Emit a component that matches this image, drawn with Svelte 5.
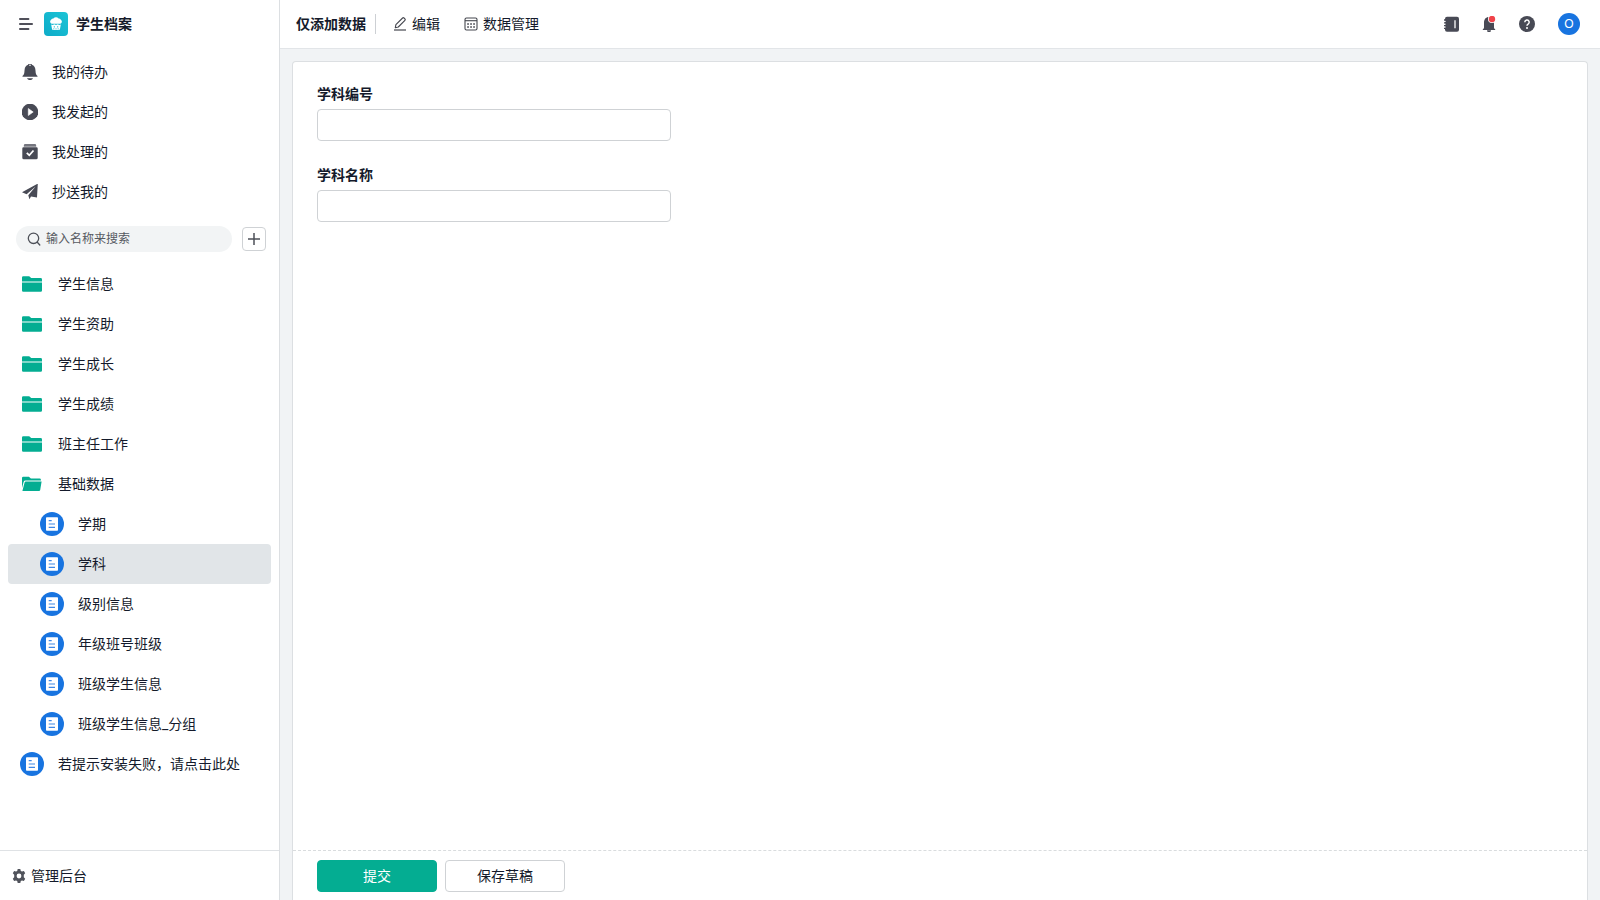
<script>
  const shortcuts = [
    { label: '我的待办', icon: 'bell' },
    { label: '我发起的', icon: 'play' },
    { label: '我处理的', icon: 'done' },
    { label: '抄送我的', icon: 'plane' }
  ];

  const entries = [
    { label: '学生信息', icon: 'folder' },
    { label: '学生资助', icon: 'folder' },
    { label: '学生成长', icon: 'folder' },
    { label: '学生成绩', icon: 'folder' },
    { label: '班主任工作', icon: 'folder' },
    {
      label: '基础数据',
      icon: 'open',
      children: ['学期', '学科', '级别信息', '年级班号班级', '班级学生信息', '班级学生信息_分组']
    },
    { label: '若提示安装失败，请点击此处', icon: 'form' }
  ];

  let selected = $state('学科');
  let keyword = $state('');
  let fields = $state([
    { id: 'code', label: '学科编号', value: '' },
    { id: 'name', label: '学科名称', value: '' }
  ]);
</script>

{#snippet formIcon()}
  <svg class="form-icon" width="24" height="24" viewBox="0 0 24 24" aria-hidden="true">
    <circle cx="12" cy="12" r="12" fill="#1874e0" />
    <rect x="6" y="5.3" width="12" height="13.4" rx=".8" fill="#fff" />
    <path d="M8.700 8.600h3M8.700 12h6.300M8.700 15.300h6.300" stroke="#3f88e4" stroke-width="1.200" />
  </svg>
{/snippet}

<div class="app">
  <aside class="sidebar">
    <div class="brand">
      <button class="icon-button" aria-label="菜单">
        <svg width="14" height="14" viewBox="0 0 14 14" fill="none" stroke="#50505a" stroke-width="1.8" stroke-linecap="round">
          <path d="M.9 2h8.600M.9 7h12.200M.9 12h8.600" />
        </svg>
      </button>
      <svg class="logo" width="24" height="24" viewBox="0 0 24 24" aria-hidden="true">
        <defs>
          <linearGradient id="logo-fill" x1="0" y1="1" x2="1" y2="0">
            <stop offset="0" stop-color="#0dabc8" />
            <stop offset="1" stop-color="#1cc4d6" />
          </linearGradient>
        </defs>
        <rect width="24" height="24" rx="4" fill="url(#logo-fill)" />
        <path fill="#fff" d="M7.600 11.700a2 2 0 0 1-.6-3.600 2.200 2.200 0 0 1 2.400-1.600 3.400 3.400 0 0 1 5.200 0A2.200 2.200 0 0 1 17 8.100a2 2 0 0 1-.6 3.600z" />
        <path fill="#fff" d="M7.200 12.400l1.500.5 1.600-.7 1.700.8 1.700-.8 1.600.7 1.500-.5-.8 4.700a1.100 1.100 0 0 1-1.100.9H9.100a1.100 1.100 0 0 1-1.100-.9z" />
        <path d="M10.300 14.200v1.300M13.700 14.200v1.300M9.800 17.400v-1M12 17.400v-1M14.200 17.400v-1" stroke="#14b7cf" stroke-width=".9" />
      </svg>
      <h1>学生档案</h1>
    </div>

    <nav class="menu" aria-label="流程">
      {#each shortcuts as item}
        <a class="row shortcut" href="#{item.icon}">
          <svg width="16" height="16" viewBox="0 0 16 16" fill="#484a55" aria-hidden="true">
            {#if item.icon === 'bell'}
              <path d="M8-.8a2 2 0 0 1 1.900 1.500c2.300.8 3.300 2.700 3.500 5l.3 3c.1 1.200.7 2.200 1.800 3.300v.8H.5V12c1.100-1.100 1.700-2.100 1.800-3.300l.3-3c.2-2.300 1.200-4.200 3.500-5A2 2 0 0 1 8-.8zM5 14.200h6c-.5 1.200-1.500 1.800-3 1.800s-2.500-.6-3-1.800z" />
              <circle cx="8" cy="1.300" r=".8" fill="#fff" />
            {:else if item.icon === 'play'}
              <circle cx="8" cy="8" r="8.300" />
              <path d="M6.300 4.500v7l4.900-3.500z" fill="#fff" stroke="#fff" stroke-width=".6" stroke-linejoin="round" />
            {:else if item.icon === 'done'}
              <path d="M3 .3h10a1.200 1.200 0 0 1 1.200 1.200v.3H1.800v-.3A1.200 1.200 0 0 1 3 .3z" />
              <path d="M1.800 2h12.400v1.200H1.800z" fill="#9c9da3" />
              <path d="M1.500 3.300h13a1.200 1.200 0 0 1 1.200 1.200v9.200a1.500 1.500 0 0 1-1.500 1.500H1.800a1.500 1.500 0 0 1-1.500-1.500V4.500a1.200 1.200 0 0 1 1.200-1.200z" />
              <path d="M4.800 8.800l2.500 2.500 4.200-4.800" fill="none" stroke="#fff" stroke-width="1.800" />
            {:else}
              <path d="M15.800-.4L0 8.300l4.600 1.900L13.600 2.500 6.300 11.200l1.100 4.100 1.600-2.800 6 1.100z" />
            {/if}
          </svg>
          <span>{item.label}</span>
        </a>
      {/each}
    </nav>

    <div class="tools">
      <label class="search">
        <svg width="14" height="14" viewBox="0 0 14 14" fill="none" stroke="#4d5058" stroke-width="1.300" stroke-linecap="round" aria-hidden="true">
          <circle cx="6.500" cy="6.300" r="5.200" />
          <path d="M10.300 10.300l2.500 2.700" />
        </svg>
        <input type="text" aria-label="搜索" placeholder="输入名称来搜索" bind:value={keyword} />
      </label>
      <button class="add" aria-label="新建">
        <svg width="14" height="14" viewBox="0 0 14 14" stroke="#4d5058" stroke-width="1.500" aria-hidden="true">
          <path d="M7 1v12M1 7h12" />
        </svg>
      </button>
    </div>

    <nav class="menu tree" aria-label="表单">
      {#each entries as entry}
        <a class="row entry" href="#{entry.label}">
          {#if entry.icon === 'form'}
            {@render formIcon()}
          {:else}
            <svg width="24" height="24" viewBox="0 0 24 24" fill="#04ad92" aria-hidden="true">
              {#if entry.icon === 'folder'}
                <path d="M2 9.500V5.500a1.300 1.300 0 0 1 1.300-1.300h5.900l2 1.900h9.500a1.300 1.300 0 0 1 1.300 1.300v2.100z" />
                <path d="M2 10.500h20v7.900a1.300 1.300 0 0 1-1.300 1.300H3.300A1.300 1.300 0 0 1 2 18.400z" />
              {:else}
                <path d="M2 16V6.100a1.300 1.300 0 0 1 1.300-1.300h5.600l2 1.700h8.700a1.300 1.300 0 0 1 1.300 1.300v.7H5.500a2 2 0 0 0-1.900 1.400z" />
                <path d="M5.900 9.500h15.700L20.200 18a1.300 1.300 0 0 1-1.300 1.100H2.400L4.600 10.500a1.300 1.300 0 0 1 1.300-1z" />
              {/if}
            </svg>
          {/if}
          <span>{entry.label}</span>
        </a>
        {#each entry.children ?? [] as child}
          <a
            class="row entry child"
            class:selected={selected === child}
            href="#{child}"
            onclick={() => (selected = child)}
          >
            {@render formIcon()}
            <span>{child}</span>
          </a>
        {/each}
      {/each}
    </nav>

    <a class="admin" href="#admin">
      <svg width="14" height="14" viewBox="0 0 14 14" aria-hidden="true">
        <path
          fill="#50535b"
          fill-rule="evenodd"
          d="M5.700 0h2.600l.5 1.900 1.200.7 1.900-.6 1.300 2.300-1.400 1.400v2.600l1.400 1.400-1.300 2.300-1.900-.6-1.200.7-.5 1.900H5.700l-.5-1.900-1.200-.7-1.900.6L.8 9.700l1.400-1.400V5.700L.8 4.300 2.100 2l1.900.6 1.200-.7zM7 4.600a2.400 2.400 0 1 0 0 4.800 2.400 2.400 0 0 0 0-4.800z"
        />
      </svg>
      <span>管理后台</span>
    </a>
  </aside>

  <div class="main">
    <header class="topbar">
      <h2>仅添加数据</h2>
      <button class="action">
        <svg width="14" height="14" viewBox="0 0 14 14" fill="none" stroke="#45474f" aria-hidden="true">
          <path d="M1 13h12" stroke-width="1.200" />
          <path d="M2.300 10.700l.6-3L9.600 1a1 1 0 0 1 1.400 0l.9.9a1 1 0 0 1 0 1.400L5.300 10z" stroke-width="1.100" stroke-linejoin="round" />
        </svg>
        编辑
      </button>
      <button class="action">
        <svg width="14" height="14" viewBox="0 0 14 14" fill="none" stroke="#45474f" aria-hidden="true">
          <rect x="1" y="1" width="12" height="12" rx="1.500" stroke-width="1.100" />
          <path d="M1 3.700h12" stroke-width="1.100" />
          <path d="M3.200 7h1.700M6.200 7h1.700M9.200 7h1.700M3.200 10h1.700M6.200 10h1.700M9.200 10h1.700" stroke-width="1.500" />
        </svg>
        数据管理
      </button>

      <div class="account">
        <button class="icon-button" aria-label="通讯录">
          <svg width="16" height="16" viewBox="0 0 16 16" aria-hidden="true">
            <rect x="2" y=".8" width="14" height="15" rx="2" fill="#484a55" />
            <path d="M1 4h3M1 6.800h3M1 9.600h3M1 12.400h3" stroke="#484a55" stroke-width="1.300" />
            <path d="M2 5.400h1M2 8.200h1M2 11h1" stroke="#fff" stroke-width=".7" />
            <path d="M12 4.300v8" stroke="#fff" stroke-width="1.300" />
          </svg>
        </button>
        <button class="icon-button" aria-label="通知">
          <svg width="16" height="16" viewBox="0 0 16 16" aria-hidden="true">
            <path fill="#484a55" d="M8 1.100c3.300 0 5 2.400 5 5.600v4.500c0 1 .3 1.500 1.200 2v.9H1.800v-.9c.9-.5 1.200-1 1.200-2V6.700C3 3.500 4.700 1.100 8 1.100zM6 14.300h4a2 2 0 0 1-4 0z" />
            <circle cx="11" cy="3" r="4" fill="#fff" />
            <circle cx="11" cy="3" r="3.200" fill="#f0434a" />
          </svg>
        </button>
        <button class="icon-button" aria-label="帮助">
          <svg width="16" height="16" viewBox="0 0 16 16" aria-hidden="true">
            <circle cx="8" cy="8" r="8" fill="#484a55" />
            <path d="M5.800 6.200a2.200 2.200 0 1 1 3.300 1.900c-.7.4-1.100.8-1.100 1.600" fill="none" stroke="#fff" stroke-width="1.500" />
            <circle cx="8" cy="11.900" r="1" fill="#fff" />
          </svg>
        </button>
        <button class="avatar">O</button>
      </div>
    </header>

    <form class="card" onsubmit={(event) => event.preventDefault()}>
      <div class="fields">
        {#each fields as field}
          <div class="field">
            <label for={field.id}>{field.label}</label>
            <input id={field.id} type="text" bind:value={field.value} />
          </div>
        {/each}
      </div>
      <div class="buttons">
        <button type="submit" class="primary">提交</button>
        <button type="button">保存草稿</button>
      </div>
    </form>
  </div>
</div>

<style>
  :global(body) {
    background: #f1f3f5;
  }

  .app {
    display: flex;
    min-height: 100vh;
    color: #141a2b;
    font: 14px/20px Roboto, 'Noto Sans CJK SC', sans-serif;
  }

  .app :is(div, aside, nav, header, form, input, button, a, label) {
    box-sizing: border-box;
  }

  svg {
    display: block;
    flex: none;
  }

  a {
    color: inherit;
    text-decoration: none;
  }

  button,
  input {
    color: inherit;
    font: inherit;
  }

  button {
    cursor: pointer;
  }

  h1,
  h2 {
    margin: 0;
    font-size: 14px;
    font-weight: 600;
  }

  .icon-button {
    padding: 0;
    border: 0;
    background: none;
  }

  .sidebar {
    display: flex;
    flex: none;
    flex-direction: column;
    width: 280px;
    border-right: 1px solid #dcdfe2;
    background: #fff;
  }

  .brand {
    display: flex;
    align-items: center;
    height: 48px;
    padding-left: 19px;
  }

  .logo {
    margin: 0 8px 0 11px;
  }

  .menu {
    display: flex;
    flex-direction: column;
    padding: 4px 8px 0;
  }

  .row {
    display: flex;
    align-items: center;
    height: 40px;
    border-radius: 4px;
  }

  .shortcut {
    gap: 14px;
    padding-left: 14px;
  }

  .tools {
    display: flex;
    align-items: center;
    gap: 10px;
    padding: 14px 13px 8px 16px;
  }

  .search {
    display: flex;
    flex: 1;
    align-items: center;
    gap: 5px;
    height: 26px;
    padding: 0 11px;
    border-radius: 13px;
    background: #f2f4f5;
    font-size: 12px;
  }

  .search input {
    flex: 1;
    min-width: 0;
    padding: 0;
    border: 0;
    outline: 0;
    background: none;
  }

  .search input::placeholder {
    color: #565a61;
    opacity: 1;
  }

  .add {
    display: grid;
    place-items: center;
    width: 24px;
    height: 24px;
    padding: 0;
    border: 1px solid #cfd2d5;
    border-radius: 4px;
    background: #fff;
  }

  .tree {
    flex: 1;
  }

  .entry {
    gap: 14px;
    padding-left: 12px;
  }

  .child {
    padding-left: 32px;
  }

  .selected {
    background: #e1e5e8;
  }

  .admin {
    display: flex;
    align-items: center;
    gap: 5px;
    height: 50px;
    padding-left: 12px;
    border-top: 1px solid #dfe2e5;
  }

  .main {
    display: flex;
    flex: 1;
    flex-direction: column;
    min-width: 0;
  }

  .topbar {
    display: flex;
    align-items: center;
    height: 49px;
    padding: 0 20px 0 16px;
    border-bottom: 1px solid #e2e5e8;
    background: #fff;
  }

  h2 {
    margin-right: 5px;
    padding-right: 9px;
    border-right: 1px solid #cdd0d4;
  }

  .action {
    display: flex;
    align-items: center;
    gap: 5px;
    padding: 0 12px;
    border: 0;
    background: none;
  }

  .account {
    display: flex;
    align-items: center;
    gap: 22px;
    margin-left: auto;
  }

  .avatar {
    width: 22px;
    height: 22px;
    margin-left: 1px;
    padding: 0;
    border: 0;
    border-radius: 50%;
    background: #1874e0;
    color: #fff;
    font: 12px/22px 'Liberation Sans', sans-serif;
  }

  .card {
    display: flex;
    flex: 1;
    flex-direction: column;
    margin: 12px 12px 0;
    border: 1px solid #dcdfe2;
    border-bottom: 0;
    border-radius: 4px 4px 0 0;
    background: #fff;
  }

  .fields {
    display: flex;
    flex: 1;
    flex-direction: column;
    gap: 24px;
    padding: 22px 24px;
  }

  .field {
    display: flex;
    flex-direction: column;
    gap: 5px;
    max-width: 354px;
  }

  .field label {
    font-weight: 600;
  }

  .field input {
    height: 32px;
    padding: 0 8px;
    border: 1px solid #cfd2d5;
    border-radius: 4px;
    background: #fff;
  }

  .buttons {
    display: flex;
    gap: 8px;
    padding: 9px 24px 8px;
    border-top: 1px dashed #d9dcde;
  }

  .buttons button {
    width: 120px;
    height: 32px;
    padding: 0;
    border: 1px solid #cfd2d5;
    border-radius: 4px;
    background: #fff;
    line-height: 20px;
  }

  .buttons .primary {
    border-color: #04ad92;
    background: #04ad92;
    color: #fff;
  }
</style>
